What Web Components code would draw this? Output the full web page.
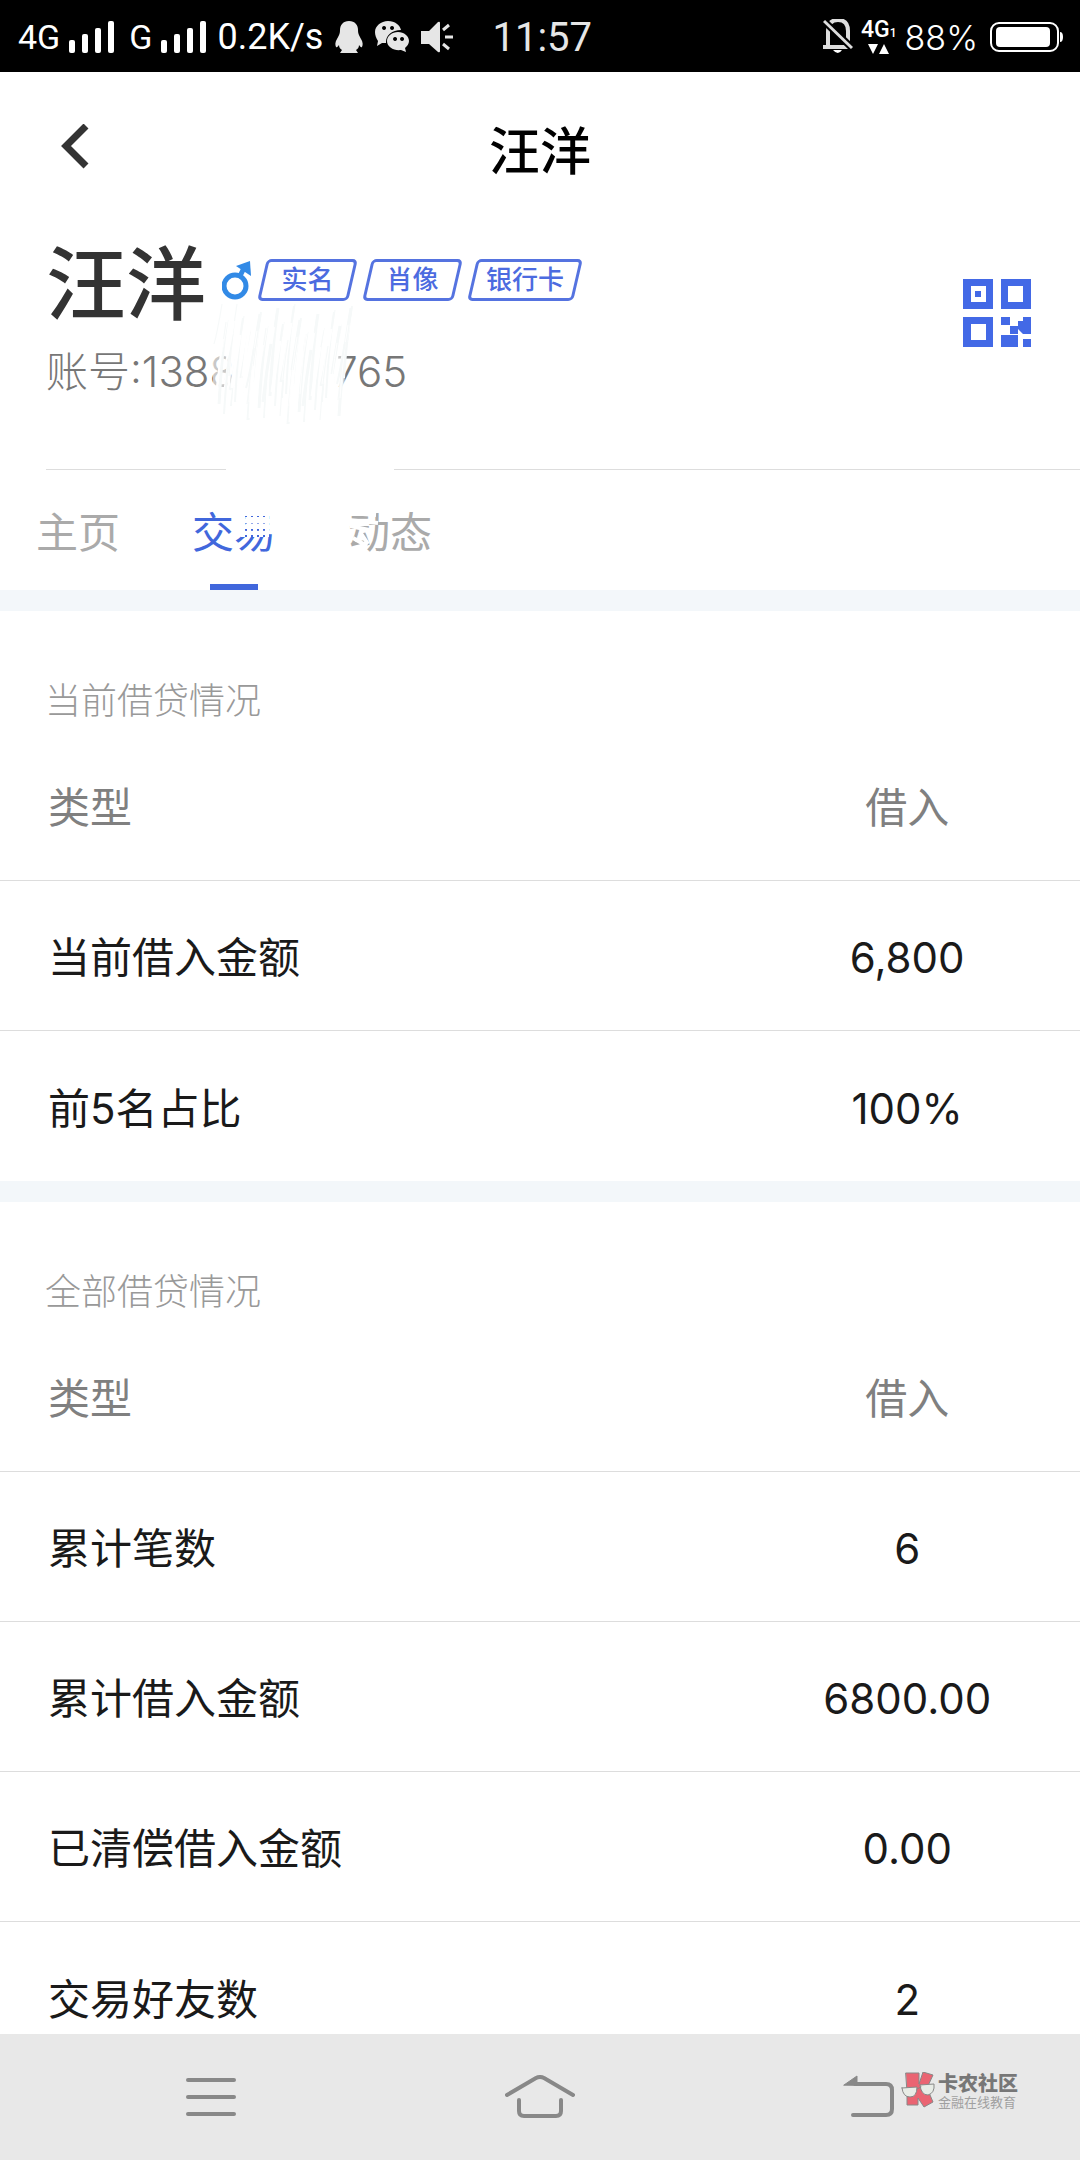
<!DOCTYPE html>
<html lang="zh-CN">

<head>
    <meta charset="utf-8">
    <meta name="viewport" content="width=device-width, initial-scale=1">
    <title>汪洋</title>
    <style>
        body {
            margin: 0;
            background: #fff;
            color: #1a1a1a;
            font-family: Inter, "Noto Sans CJK SC", sans-serif;
        }
    </style>
</head>

<body>
    <template id="app-shell-template">
        <style>
            :host {
                display: flex;
                flex-direction: column;
                height: 100vh;
                overflow: hidden;
            }

            main {
                flex: 1;
                min-height: 0;
                overflow: hidden;
            }
        </style>
        <slot name="top"></slot>
        <main>
            <slot></slot>
        </main>
        <slot name="bottom"></slot>
    </template>

    <template id="status-bar-template">
        <style>
            :host {
                display: flex;
                align-items: center;
                box-sizing: border-box;
                flex: none;
                height: 72px;
                padding: 2px 16px 0 18px;
                background: #000;
                color: #fff;
                font-family: Roboto, sans-serif;
                font-size: 34px;
            }

            svg {
                display: block;
                fill: currentColor;
            }

            .signal {
                margin: 0 14px 0 9px;
            }

            .speed {
                margin-left: -4px;
                font-size: 36px;
            }

            .notices {
                display: flex;
                gap: 12px;
                margin-left: 12px;
                color: #e6e6e6;
            }

            time {
                margin-left: 38px;
                font-size: 40px;
                color: #e6e6e6;
            }

            .right {
                display: flex;
                align-items: center;
                margin-left: auto;
            }

            .data {
                display: grid;
                justify-items: center;
                margin: 0 8px 0 8px;
                font-size: 23px;
                font-weight: 500;
                line-height: 22px;
            }

            .data small {
                font-size: 12px;
            }

            .level {
                font-family: Inter, sans-serif;
                font-weight: 300;
            }

            .battery {
                margin-left: 12px;
            }
        </style>
        <span>4G</span>
        <svg class="signal" width="46" height="32" viewBox="0 0 46 32">
            <rect y="19" width="6" height="13" rx="2"/><rect x="13" y="13" width="6" height="19" rx="2"/><rect x="26" y="7" width="6" height="25" rx="2"/><rect x="39" width="6" height="32" rx="2"/>
        </svg>
        <span>G</span>
        <svg class="signal" width="46" height="32" viewBox="0 0 46 32">
            <rect y="19" width="6" height="13" rx="2"/><rect x="13" y="13" width="6" height="19" rx="2"/><rect x="26" y="7" width="6" height="25" rx="2"/><rect x="39" width="6" height="32" rx="2"/>
        </svg>
        <span class="speed">0.2K/s</span>
        <div class="notices">
            <svg width="28" height="32" viewBox="0 0 28 32">
                <path d="M14 0c6 0 9 4 9 9 0 4 1 5 3 9 2 3 2 6 1 8-1 1-2-1-3-2 0 2-1 4-3 5l2 3H5l2-3c-2-1-3-3-3-5-1 1-2 3-3 2-1-2-1-5 1-8 2-4 3-5 3-9 0-5 3-9 9-9z"/>
            </svg>
            <svg width="34" height="32" viewBox="0 0 34 32">
                <path fill-rule="evenodd" d="M13 0c7 0 12 4 13 9-9 0-15 5-15 12v1l-4 0-5 3 1-5C1 17 0 14 0 11 0 5 6 0 13 0zM9 5a2 2 0 1 0 .1 0zM17 5a2 2 0 1 0 .1 0z"/>
                <path fill-rule="evenodd" d="M23 11c6 0 11 4 11 9 0 3-2 5-4 7l1 4-5-2c-7 1-14-3-14-9 0-5 5-9 11-9zM20 16a2 2 0 1 0 .1 0zM27 16a2 2 0 1 0 .1 0z"/>
            </svg>
            <svg width="33" height="32" viewBox="0 0 33 32">
                <path d="M0 10h8L17 1q2-1 2 1v28q0 2-2 1L8 23H0z"/>
                <path d="M22 9l6-5M24 16h8M22 23l6 5" fill="none" stroke="currentColor" stroke-width="3"/>
            </svg>
        </div>
        <time>11:57</time>
        <div class="right">
            <svg width="30" height="36" viewBox="0 0 30 36">
                <path d="M5 28V12Q5 1 15 1t10 11v16M0 28h27" fill="none" stroke="#ddd" stroke-width="4"/>
                <path d="M10 31h9q-4 6-9 0z"/>
                <path d="M1 2l28 27" stroke="#000" stroke-width="7"/>
                <path d="M1 2l28 27" stroke="#ddd" stroke-width="3"/>
            </svg>
            <div class="data">
                <span>4G<small>1</small></span>
                <svg width="22" height="11" viewBox="0 0 22 11"><path d="M0 0h10L5 10zM11 10h10L16 0z"/></svg>
            </div>
            <span class="level">88%</span>
            <svg class="battery" width="74" height="32" viewBox="0 0 74 32">
                <rect x="1" y="2" width="67" height="28" rx="8" fill="none" stroke="currentColor" stroke-width="2"/>
                <rect x="6" y="6" width="54" height="20" rx="4"/>
                <path d="M70 11q3 0 3 5t-3 5z"/>
            </svg>
        </div>
    </template>

    <template id="title-bar-template">
        <style>
            :host {
                display: grid;
                grid-template-columns: 150px 1fr 150px;
                align-items: center;
                height: 150px;
            }

            button {
                display: flex;
                justify-content: center;
                border: 0;
                padding: 0;
                background: none;
            }

            h1 {
                margin: 0;
                padding-top: 10px;
                color: #000;
                font-size: 51px;
                font-weight: 500;
                line-height: 60px;
                text-align: center;
            }
        </style>
        <button aria-label="返回">
            <svg width="28" height="46" viewBox="0 0 28 46"><path d="M25 2L5 22l20 20" fill="none" stroke="#333" stroke-width="7"/></svg>
        </button>
        <h1><slot></slot></h1>
    </template>

    <template id="cert-tag-template">
        <style>
            :host {
                position: relative;
                box-sizing: border-box;
                min-width: 99px;
                padding: 0 18px;
                color: #4c6be0;
                font-size: 26px;
                font-weight: 500;
                line-height: 42px;
                text-align: center;
            }

            :host::before {
                content: "";
                position: absolute;
                inset: 0 4px;
                border: 3px solid #5573e0;
                border-radius: 5px;
                transform: skewX(-13deg);
            }
        </style>
        <slot></slot>
    </template>

    <template id="user-profile-template">
        <style>
            :host {
                display: flex;
                align-items: center;
                position: relative;
                margin-left: 46px;
                padding: 12px 49px 67px 0;
                border-bottom: 1px solid #ddd;
            }

            .info {
                flex: 1;
            }

            .name {
                display: flex;
                align-items: center;
                gap: 6px;
            }

            .name svg,
            ::slotted(cert-tag) {
                margin-bottom: 8px;
            }

            h2 {
                margin: 0 10px 0 0;
                color: #333;
                font-size: 80px;
                font-weight: 500;
                line-height: 100px;
            }

            .account {
                display: flex;
                margin: 8px 0 0;
                color: #777;
                font-size: 42px;
                font-weight: 300;
                line-height: 60px;
            }

            .hidden {
                width: 99px;
            }

            .qr {
                margin-bottom: 10px;
                border: 0;
                padding: 0;
                background: none;
            }

            svg {
                display: block;
            }

            /* eraser marks over the number, the divider and the tabs */
            .eraser {
                position: absolute;
                top: 70px;
                left: 154px;
                z-index: 1;
                pointer-events: none;
            }
        </style>
        <div class="info">
            <div class="name">
                <h2><slot name="name"></slot></h2>
                <svg width="30" height="40" viewBox="0 0 30 40" fill="none" stroke="#328ae6" stroke-width="5" role="img" aria-label="男">
                    <circle cx="13" cy="26" r="11"/>
                    <path d="M18 16l5-10"/>
                    <path d="M14 6l14-5 1 15z" fill="#328ae6" stroke="none"/>
                </svg>
                <slot name="tags"></slot>
            </div>
            <p class="account">
                <slot name="start"></slot><span class="hidden"></span><slot name="end"></slot>
            </p>
        </div>
        <button class="qr" aria-label="二维码">
            <svg width="68" height="68" viewBox="0 0 68 68" fill="#4369e6">
                <path fill-rule="evenodd" d="M0 0h30v30H0zM8 7v16h15V7zM38 0h30v30H38zM45 7v16h15V7zM0 38h30v30H0zM8 45v16h15V45z"/>
                <path d="M12 12h6v6h-6zM38 38h9v8h-9zM60 38h8v17h-8l-5-5v-8h5zM47 47h8v8h-8zM38 56h17v12H38zM60 60h8v8h-8z"/>
            </svg>
        </button>
        <svg class="eraser" width="260" height="270" viewBox="0 0 260 270" fill="none">
            <path d="M13 58h24v46H13z" fill="#fff" fill-opacity=".6"/>
            <path d="M132 58h14l-2 46h-12z" fill="#fff" fill-opacity=".6"/>
            <g id="marks"></g>
            <path d="M26 177h168" stroke="#fff" stroke-width="8"/>
            <path d="M38 222h34M38 229h34M38 235h34M38 241h28M43 219v26M49 219v26M55 219v26M61 219v26M67 219v26M150 221l26 2M148 228l30 3M150 234l24 5M153 246l14 8M160 240l8 12" stroke="#fff" stroke-width="4"/>
        </svg>
    </template>

    <template id="tab-bar-template">
        <style>
            :host {
                display: flex;
                height: 120px;
                border-bottom: 21px solid #f3f7fa;
            }
        </style>
        <slot></slot>
    </template>

    <template id="tab-item-template">
        <style>
            :host {
                display: flex;
            }

            button {
                position: relative;
                border: 0;
                padding: 0 36px 2px;
                background: none;
                color: #aaa;
                font: inherit;
                font-size: 42px;
            }

            :host([selected]) button {
                color: #4167dc;
            }

            :host([selected]) button::after {
                content: "";
                position: absolute;
                bottom: 0;
                left: calc(50% - 24px);
                width: 48px;
                height: 6px;
                background: #4167dc;
            }
        </style>
        <button><slot></slot></button>
    </template>

    <template id="loan-section-template">
        <style>
            :host {
                display: block;
            }

            :host(:not(:last-of-type)) {
                border-bottom: 21px solid #f3f7fa;
            }

            table {
                width: 100%;
                border-spacing: 0;
                table-layout: fixed;
                font-size: 42px;
            }

            caption {
                padding: 63px 45px 3px;
                color: #999;
                font-size: 36px;
                font-weight: 300;
                line-height: 54px;
                text-align: left;
            }

            th,
            td {
                box-sizing: border-box;
                height: 150px;
                padding: 5px 0 0;
                border-bottom: 1px solid #ddd;
                font-weight: 400;
                line-height: 60px;
            }

            th:first-child {
                padding-left: 48px;
                text-align: left;
            }

            th:last-child,
            td {
                width: 32%;
                text-align: center;
            }

            thead th {
                color: #808080;
            }

            tbody tr:last-child > * {
                border-bottom: 0;
            }
        </style>
        <table>
            <caption></caption>
            <thead>
                <tr><th scope="col">类型</th><th scope="col">借入</th></tr>
            </thead>
            <tbody></tbody>
        </table>
    </template>

    <template id="nav-bar-template">
        <style>
            :host {
                display: grid;
                grid-template-columns: repeat(3, 1fr);
                flex: none;
                position: relative;
                height: 126px;
                padding: 0 46px;
                background: #e8e8e8;
            }

            button {
                display: flex;
                align-items: center;
                justify-content: center;
                border: 0;
                padding: 0;
                background: none;
            }

            svg {
                fill: none;
                stroke: #888;
                stroke-width: 4;
                stroke-linecap: round;
                stroke-linejoin: round;
            }

            .watermark {
                display: flex;
                gap: 3px;
                position: absolute;
                top: 38px;
                right: 62px;
            }

            .watermark p {
                margin: 0;
                color: #777;
                font-size: 20px;
                font-weight: 900;
                line-height: 24px;
            }

            .watermark small {
                display: block;
                color: #a0a0a0;
                font-size: 13px;
                font-weight: 400;
                line-height: 12px;
            }
        </style>
        <button aria-label="最近任务">
            <svg width="50" height="40" viewBox="0 0 50 40"><path d="M2 3h46M2 20h46M2 37h46"/></svg>
        </button>
        <button aria-label="主屏幕">
            <svg width="70" height="44" viewBox="0 0 70 44"><path d="M2 20L31 3q4-2 8 0l29 17M14 25v11q0 5 5 5h32q5 0 5-5V25"/></svg>
        </button>
        <button aria-label="返回">
            <svg width="52" height="44" viewBox="0 0 52 44"><path d="M10 40h33q6 0 6-6V15q0-6-6-6H12"/><path d="M1 10L14 1v9z" fill="#888" stroke-width="1"/></svg>
        </button>
        <div class="watermark">
            <svg width="34" height="36" viewBox="0 0 34 36" style="stroke-width: 1">
                <path d="M5 1h13v11l4-12 10 3-6 13 6 14-9 5-6-9v7H6V20z" fill="#ea6472"/>
                <path d="M1 16l15-1q0 10-7 10-7 0-8-9zM19 13l14-1q1 9-6 11-7 0-8-10z" fill="#e8ece6"/>
                <path d="M16 17l4-2"/>
            </svg>
            <p>卡农社区<small>金融在线教育</small></p>
        </div>
    </template>

    <app-shell>
        <status-bar slot="top"></status-bar>
        <title-bar>汪洋</title-bar>
        <user-profile>
            <span slot="name">汪洋</span>
            <cert-tag slot="tags">实名</cert-tag>
            <cert-tag slot="tags">肖像</cert-tag>
            <cert-tag slot="tags">银行卡</cert-tag>
            <span slot="start">账号:1388</span>
            <span slot="end">765</span>
        </user-profile>
        <tab-bar>
            <tab-item>主页</tab-item>
            <tab-item selected>交易</tab-item>
            <tab-item>动态</tab-item>
        </tab-bar>
        <loan-section heading="当前借贷情况" rows="当前借入金额=6,800;前5名占比=100%"></loan-section>
        <loan-section heading="全部借贷情况" rows="累计笔数=6;累计借入金额=6800.00;已清偿借入金额=0.00;交易好友数=2"></loan-section>
        <nav-bar slot="bottom"></nav-bar>
    </app-shell>

    <script>
        class TemplateElement extends HTMLElement {
            constructor() {
                super();
                const template = document.getElementById(this.localName + "-template");
                this.attachShadow({ mode: "open" }).appendChild(template.content.cloneNode(true));
            }
        }

        ["app-shell", "status-bar", "title-bar", "cert-tag", "tab-bar", "tab-item", "nav-bar"].forEach(name => {
            customElements.define(name, class extends TemplateElement { });
        });

        customElements.define("user-profile", class UserProfile extends TemplateElement {
            connectedCallback() {
                // loose, nearly vertical strokes
                let marks = "";
                for (let i = 0; i < 110; i++) {
                    const x = 14 + (i * 37) % 131;
                    const y = 12 + (i * 23) % 48;
                    const end = y + 40 + (i * 17) % 50;
                    const color = i % 2 ? "#fff" : "#f6f9f9";
                    marks += `<path d="M${x + 8} ${y}Q${x + 3} ${y + 30} ${x} ${end}" stroke="${color}" stroke-width="${1 + i % 3}"/>`;
                }
                this.shadowRoot.getElementById("marks").innerHTML = marks;
            }
        });

        customElements.define("loan-section", class LoanSection extends TemplateElement {
            connectedCallback() {
                this.shadowRoot.querySelector("caption").textContent = this.getAttribute("heading");
                const body = this.shadowRoot.querySelector("tbody");
                this.getAttribute("rows").split(";").forEach(row => {
                    const [label, value] = row.split("=");
                    const tr = body.insertRow();
                    const th = document.createElement("th");
                    th.scope = "row";
                    th.textContent = label;
                    tr.appendChild(th);
                    tr.insertCell().textContent = value;
                });
            }
        });
    </script>
</body>

</html>
